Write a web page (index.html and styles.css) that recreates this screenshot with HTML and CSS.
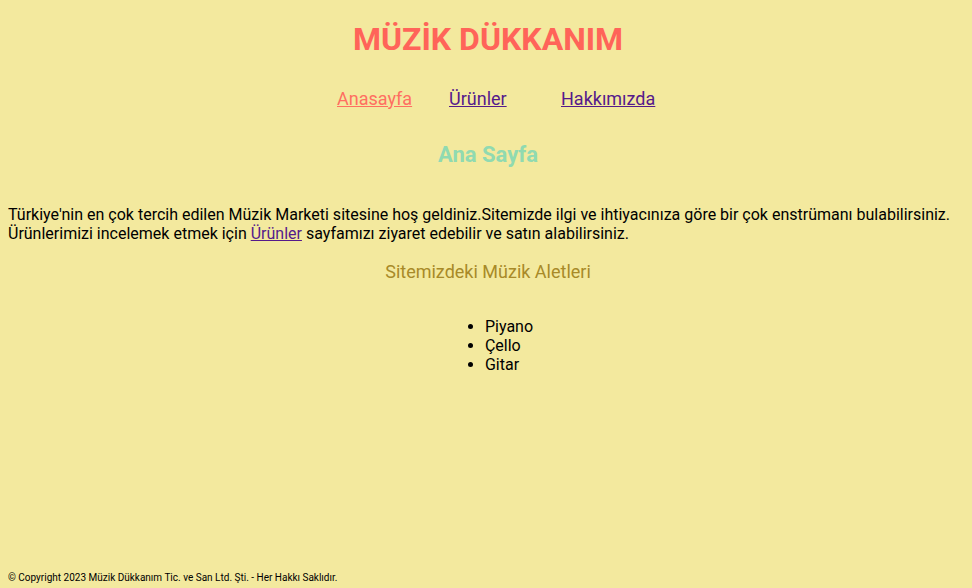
FILE: index.html
```html
<!DOCTYPE html>
<html lang="tr">
<head>
<meta charset="utf-8">
<title>Müzik Dükkanım</title>
<link rel="stylesheet" href="styles.css">
</head>
<body>
<header class="site-header">
  <h1 class="site-title">MÜZİK DÜKKANIM</h1>
  <nav>
    <ul class="nav-list">
      <li class="nav-item"><a class="nav-link active" href="#">Anasayfa</a></li>
      <li class="nav-item"><a class="nav-link" href="#">Ürünler</a></li>
      <li class="nav-item"><a class="nav-link" href="#">Hakkımızda</a></li>
    </ul>
  </nav>
</header>
<main class="content">
  <h2 class="page-title">Ana Sayfa</h2>
  <p class="intro">Türkiye'nin en çok tercih edilen Müzik Marketi sitesine hoş geldiniz.Sitemizde ilgi ve ihtiyacınıza göre bir çok enstrümanı bulabilirsiniz. Ürünlerimizi incelemek etmek için <a class="inline-link" href="#">Ürünler</a> sayfamızı ziyaret edebilir ve satın alabilirsiniz.</p>
  <h3 class="section-title">Sitemizdeki Müzik Aletleri</h3>
  <ul class="instrument-list">
    <li>Piyano</li>
    <li>Çello</li>
    <li>Gitar</li>
  </ul>
</main>
<footer class="site-footer">© Copyright 2023 Müzik Dükkanım Tic. ve San Ltd. Şti. - Her Hakkı Saklıdır.</footer>
</body>
</html>
```
FILE: styles.css
```css
html, body {
  background: #f3e99e;
}
body {
  margin: 8px 8px 4px;
  font-family: Roboto, "Liberation Sans", sans-serif;
  color: #000;
  min-height: calc(100vh - 12px);
  display: flex;
  flex-direction: column;
}
.site-title {
  margin: 12px 0 0;
  padding-left: 4px;
  text-align: center;
  font-size: 32px;
  font-weight: 700;
  color: #ff6459;
}
.nav-list {
  list-style: none;
  margin: 30px 0 0;
  padding: 0 0 0 38px;
  display: flex;
  justify-content: center;
  font-size: 18px;
}
.nav-item {
  width: 112px;
}
.nav-link {
  color: #551a8b;
}
.nav-link.active {
  color: #ff6f61;
}
.page-title {
  margin: 33px 0 0;
  padding-left: 4px;
  text-align: center;
  font-size: 22px;
  font-weight: 700;
  color: #90dab1;
}
.intro {
  margin: 38px 0 0;
  font-size: 16px;
}
.inline-link {
  color: #551a8b;
}
.section-title {
  margin: 18px 0 0;
  padding-left: 4px;
  text-align: center;
  font-size: 18px;
  font-weight: 400;
  color: #a88a28;
}
.instrument-list {
  margin: 35px auto 0;
  width: fit-content;
  padding-left: 46px;
  font-size: 16px;
}
.site-footer {
  margin-top: auto;
  font-size: 10px;
  line-height: 12px;
}
```
